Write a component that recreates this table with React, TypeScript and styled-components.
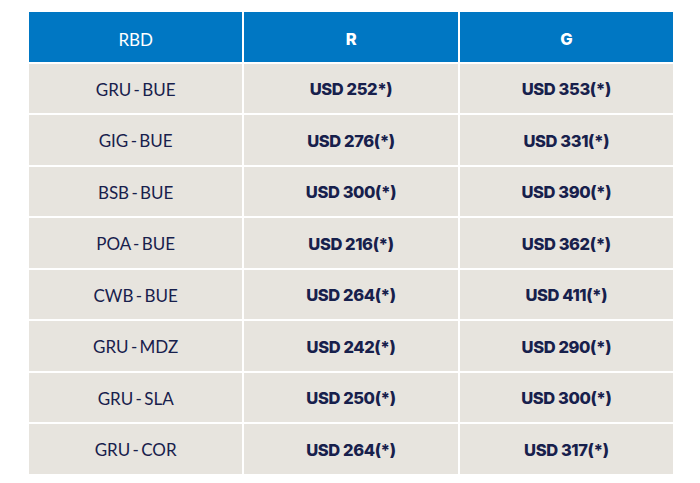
import React from "react";
import styled, { createGlobalStyle } from "styled-components";

const Global = createGlobalStyle`
  html, body { margin: 0; padding: 0; background: #ffffff; }
  body { font-family: Lato, "Open Sans", sans-serif; }
`;

const Page = styled.div`
  width: 700px;
  height: 483px;
  padding: 12px 0 0 29px;
  box-sizing: border-box;
`;

const Table = styled.div`
  width: 644px;
  display: grid;
  grid-template-columns: repeat(3, 1fr);
  grid-auto-rows: 49.5px;
  gap: 2px;
`;

const Cell = styled.div<{ $head?: boolean; $bold?: boolean }>`
  display: flex;
  align-items: center;
  justify-content: center;
  box-sizing: border-box;
  padding-top: ${(p) => (p.$head ? "5px" : "2px")};
  background: ${(p) => (p.$head ? "#0077c3" : "#e7e4de")};
  color: ${(p) => (p.$head ? "#ffffff" : "#17204c")};
  font-family: ${(p) => (p.$bold ? "Inter, Lato, sans-serif" : "Lato, sans-serif")};
  font-size: ${(p) => (p.$bold ? "16.5px" : "17px")};
  font-weight: ${(p) => (p.$bold ? 800 : 400)};
  letter-spacing: ${(p) => (p.$bold ? "-0.4px" : "0px")};
  word-spacing: ${(p) => (p.$bold ? "0px" : "-2px")};
`;

const rows: [string, string, string][] = [
  ["GRU - BUE", "USD 252*)", "USD 353(*)"],
  ["GIG - BUE", "USD 276(*)", "USD 331(*)"],
  ["BSB - BUE", "USD 300(*)", "USD 390(*)"],
  ["POA - BUE", "USD 216(*)", "USD 362(*)"],
  ["CWB - BUE", "USD 264(*)", "USD 411(*)"],
  ["GRU - MDZ", "USD 242(*)", "USD 290(*)"],
  ["GRU - SLA", "USD 250(*)", "USD 300(*)"],
  ["GRU - COR", "USD 264(*)", "USD 317(*)"],
];

export default function App() {
  return (
    <>
      <Global />
      <Page>
        <Table>
          <Cell $head>RBD</Cell>
          <Cell $head $bold>R</Cell>
          <Cell $head $bold>G</Cell>
          {rows.map((r) => (
            <React.Fragment key={r[0]}>
              <Cell>{r[0]}</Cell>
              <Cell $bold>{r[1]}</Cell>
              <Cell $bold>{r[2]}</Cell>
            </React.Fragment>
          ))}
        </Table>
      </Page>
    </>
  );
}
